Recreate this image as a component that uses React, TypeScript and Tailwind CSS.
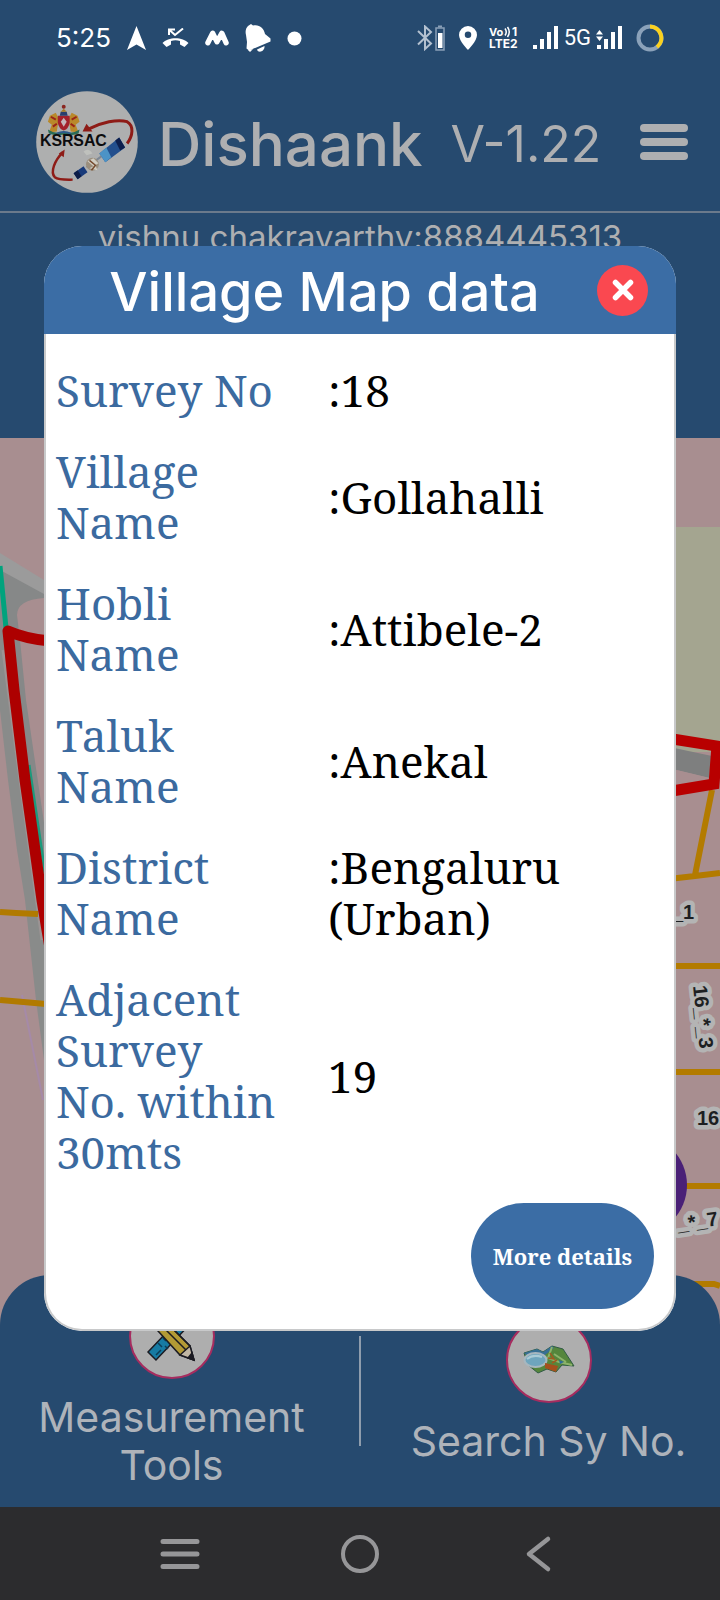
const rows = [
    { label: "Survey No", value: ":18" },
    { label: "Village Name", value: ":Gollahalli" },
    { label: "Hobli Name", value: ":Attibele-2" },
    { label: "Taluk Name", value: ":Anekal" },
    { label: "District Name", value: ":Bengaluru (Urban)" },
    { label: "Adjacent Survey No. within 30mts", value: "19" },
];

const SignalBars = ({ data = false }: { data?: boolean }) => (
    <svg className="overflow-visible" width="25" height="24" viewBox="0 0 25 24" fill="#fff">
        <rect x="0" y="19" width="4" height="4" />
        <rect x="7" y="13" width="4" height="10" />
        <rect x="14" y="6" width="4" height="17" />
        <rect x="21" y="0" width="4" height="23" />
        {data && <path d="M-1 8.500L2.500 4L6 8.500ZM-1 10.500L2.500 15L6 10.500Z" />}
    </svg>
);

const StatusBar = () => {
    return (
        <div className="flex h-19 items-center justify-between pl-14 pr-14 text-white">
            <div className="flex items-center gap-4">
                <span className="font-[Inter,sans-serif] text-[26px] leading-8">5:25</span>
                <svg width="19" height="24" viewBox="0 0 19 24" fill="#fff">
                    <path d="M9.500 0L19 24L9.500 18.500L0 24Z" />
                </svg>
                <svg width="27" height="20" viewBox="0 0 27 20" fill="none" stroke="#fff">
                    <path d="M7 7V1.500H13M7.500 2L13 7L21 0.500" strokeWidth="2" />
                    <path d="M0.500 15C6 8.500 21 8.500 26.500 15L22.500 19L18 16.500V13C15 12 12 12 9 13V16.500L4.500 19Z" fill="#fff" stroke="none" />
                </svg>
                <svg width="24" height="16" viewBox="0 0 25 16" fill="none" stroke="#fff" strokeWidth="5.500" strokeLinecap="round" strokeLinejoin="round">
                    <path d="M3 13L8 3L12.500 12L17.500 3L22 13" />
                </svg>
                <svg width="26" height="28" viewBox="0 0 26 28" fill="#fff">
                    <path d="M3 2L6 0L8 1.500C14 0 19 4 20 10L25.500 14.500V17.500L4 26.500L1.500 24.500L2 18L1 11C0 7 1 4 3 2Z" />
                    <path d="M12 25.500L19.500 22C20 28 13 29.500 12 25.500ZM3 26L5 28L8 25Z" />
                </svg>
                <svg width="15" height="15" viewBox="0 0 15 15">
                    <circle cx="7.500" cy="7.500" r="7" fill="#fff" />
                </svg>
            </div>
            <div className="flex items-center gap-3.5">
                <svg width="28" height="26" viewBox="0 0 28 26" fill="none">
                    <path d="M1 6L14 18.500L8 24V1.500L14 7L1 19.500" stroke="#b4c1d0" strokeWidth="2" />
                    <rect x="19" y="3" width="8" height="22" stroke="#8aa0b8" strokeWidth="1.500" />
                    <path d="M21 1.500H25" stroke="#8aa0b8" strokeWidth="2" />
                    <rect x="21" y="8" width="4.500" height="15" fill="#fff" />
                </svg>
                <div className="flex items-center gap-3">
                    <svg width="18" height="24" viewBox="0 0 18 24">
                        <path d="M9 0A9 9 0 0 0 0 9C0 15 9 24 9 24S18 15 18 9A9 9 0 0 0 9 0ZM9 5.500A3.200 3.200 0 1 1 9 12A3.200 3.200 0 0 1 9 5.500Z" fill="#fff" fillRule="evenodd" />
                    </svg>
                    <svg className="overflow-visible" width="30" height="30" viewBox="0 -3 30 30" fill="#fff" fontFamily="Inter, sans-serif" fontWeight="700">
                        <text x="0" y="10" fontSize="11">Vo</text>
                        <path d="M16 2.500Q18.500 6 16 9.500M18.500 1Q22 6 18.500 11" fill="none" stroke="#fff" strokeWidth="1.500" />
                        <text x="23" y="10" fontSize="12">1</text>
                        <text x="0" y="22" fontSize="12">LTE2</text>
                    </svg>
                </div>
                <div className="flex items-center gap-1.5">
                    <SignalBars />
                    <span className="font-[Roboto,sans-serif] text-[22px] leading-6">5G</span>
                    <SignalBars data />
                </div>
                <svg width="28" height="28" viewBox="0 0 28 28" fill="none" strokeWidth="4">
                    <circle cx="14" cy="14" r="11.500" stroke="#8ba2ba" />
                    <path d="M14 2.500A11.500 11.500 0 0 1 21 23" stroke="#fad11e" />
                </svg>
            </div>
        </div>
    );
};

const Logo = () => (
    <svg className="size-[102px] shrink-0" viewBox="6 9 103 103">
        <circle cx="57.500" cy="60.500" r="51.300" fill="#aeafaf" />
        <g>
            <path d="M20 34L26 31L29 37L27 50L19 51L22 43L18 40Z" fill="#b9892a" />
            <path d="M48 34L42 31L39 37L41 50L49 51L46 43L50 40Z" fill="#b9892a" />
            <path d="M21 35L26 38M47 35L42 38M23 45L27 42M45 45L41 42" stroke="#9a2318" strokeWidth="2" />
            <path d="M28 34H40V41Q39 47 34 49Q29 47 28 41Z" fill="#a3212c" />
            <path d="M34 36L37 40L34 45L31 40Z" fill="#c5b6bb" />
            <path d="M30 34H38L37 30H31Z" fill="#2a3f6e" />
            <path d="M31 30L34 27L37 30Z" fill="#a77b22" />
            <circle cx="34" cy="25" r="2" fill="#8a2620" />
            <path d="M18 48Q25 53 34 50Q43 53 50 48L49 52Q42 55 34 53Q26 55 19 52Z" fill="#2a6b55" />
            <path d="M27 52Q34 49 41 52" fill="none" stroke="#2d5a8c" strokeWidth="2" />
        </g>
        <path d="M98 62C104 54 105 44 98 40C88 37 72 41 60 47" fill="none" stroke="#8e1c17" strokeWidth="3" />
        <path d="M53 50L57 42L63 50Z" fill="#8e1c17" />
        <path d="M33 71C25 79 20 91 25 96C29 99 36 98.500 43 98.500" fill="none" stroke="#8e1c17" strokeWidth="2.500" />
        <path d="M29 72L35 68L34 76Z" fill="#8e1c17" />
        <text x="10" y="65" fontSize="16" fontWeight="700" fontFamily="Liberation Sans, Arial, sans-serif" fill="#0c0c0e">KSRSAC</text>
        <path d="M70 72L90 56L96 66L76 81Z" fill="#234f8d" />
        <path d="M70 72L77 66L82 76L76 81Z" fill="#4c93c6" />
        <path d="M86 59L90 56L96 66L91 69Z" fill="#0d1f4d" />
        <path d="M44 92L54 85L58 91L48 98Z" fill="#183a7a" />
        <path d="M44 92L48 89L52 95L48 98Z" fill="#0d1d47" />
        <path d="M57 86L72 75" stroke="#7c8794" strokeWidth="2" />
        <circle cx="63" cy="83" r="6.500" fill="#9a8e7d" />
        <path d="M58 80L64 77L69 82L64 85ZM60 87L66 84L68 89" fill="#d1cdc2" />
        <path d="M60 79L66 84L62 89" fill="none" stroke="#74492d" strokeWidth="1.500" />
        <path d="M54 70Q59 66 63 72L57 74Z" fill="#bfc1bd" />
    </svg>
);

const Header = () => {
    return (
        <header className="h-[438px] bg-[#264a6f] font-[Inter,sans-serif] text-[#aeafb1]">
            <StatusBar />
            <div className="flex h-[137px] items-center border-b-2 border-[#6b7a8c] pb-1 pl-9 pr-8">
                <Logo />
                <h1 className="ml-5 pt-1 text-[60px] font-medium leading-16">Dishaank</h1>
                <span className="ml-7 pt-1 text-[50px] leading-14">V-1.22</span>
                <button type="button" aria-label="Menu" className="ml-auto flex w-12 flex-col gap-[6px]">
                    <span className="h-2 w-full rounded-full bg-[#aeafb1]" />
                    <span className="h-2 w-full rounded-full bg-[#aeafb1]" />
                    <span className="h-2 w-full rounded-full bg-[#aeafb1]" />
                </button>
            </div>
            <p className="text-center text-[33px] leading-12">vishnu chakravarthy:8884445313</p>
        </header>
    );
};

const MapCanvas = () => (
    <svg className="absolute inset-0 size-full" viewBox="0 438 720 1070" preserveAspectRatio="xMidYMin slice">
        <rect y="438" width="720" height="1070" fill="#a88e90" />
        {/* roads on the left */}
        <path d="M0 568L44 588V598Q17 600 17 615L20 640L26 700L48 850V885L12 700L0 640Z" fill="#868888" />
        <path d="M0 553L44 580V594L0 570Z" fill="#9b9b9b" />
        <path d="M0 640H5L20 780L44 940V1060L36 1000L25 900L17 850L8 780L0 710Z" fill="#898b8a" />
        <path d="M3 650L20 780L42 940" fill="none" stroke="#9c9494" strokeWidth="3" />
        <path d="M0 566L6 628" stroke="#00a37d" strokeWidth="5" />
        <path d="M29 765L46 880" stroke="#1c9a7c" strokeWidth="3" />
        <path d="M22 995Q29 1030 43 1100" fill="none" stroke="#a58aa8" strokeWidth="2" />
        <path d="M0 912L16 913L38 914M0 1000L12 1001L46 1004" fill="none" stroke="#b17a00" strokeWidth="6" />
        <path d="M50 641Q26 639 8 631L14 690L25 780L35 850L42 900L52 960" fill="none" stroke="#ad0000" strokeWidth="11" strokeLinejoin="round" />
        {/* plots on the right */}
        <rect x="660" y="527" width="60" height="225" fill="#a4a590" />
        <path d="M660 745L712 756L709 778L660 766Z" fill="#7e7f7f" />
        <path d="M660 766L710 778V790L660 795Z" fill="#a88e90" />
        <path d="M712 790L695 875M660 880L695 876L720 873M660 966H720M660 1072H720M660 1186H720M660 1284H714L720 1286" fill="none" stroke="#b37b00" strokeWidth="6" />
        <path d="M660 737L717 746L714 784L660 793" fill="none" stroke="#b80000" strokeWidth="11" />
        <circle cx="636" cy="1185" r="51" fill="#4a2077" />
        <g fontFamily="Liberation Sans, Arial, sans-serif" fontWeight="700" fontSize="20" fill="#1d1f22" stroke="#b4b4b4" strokeWidth="9" strokeLinejoin="round" paintOrder="stroke">
            <text x="672" y="919">_1</text>
            <text transform="translate(693 986) rotate(84)">16_*_3</text>
            <text x="697" y="1125">16</text>
            <text transform="translate(678 1231) rotate(-8)">_*_7</text>
        </g>
    </svg>
);

const PencilRuler = () => (
    <svg width="52" height="52" viewBox="0 0 52 52" stroke="#1b1b22" strokeWidth="1.500">
        <path d="M2 42L38 4L46 12L10 50Z" fill="#177ba3" />
        <path d="M12 33L16 37M17 28L20 31M22 23L26 27M10 45L15 40M19 36L22 39" stroke="#0c3d57" />
        <path d="M2 10L10 2L44 36L48 50L34 45Z" fill="#b39a35" />
        <path d="M6 6L40 40M10 2L44 36" fill="none" />
        <path d="M34 45L44 36L48 50Z" fill="#c1b7a5" />
        <path d="M42 48L46 43L48 50Z" fill="#1b1b22" />
    </svg>
);

const MapSearch = () => (
    <svg width="52" height="30" viewBox="0 0 52 30">
        <path d="M1 8L14 4L20 7L29 1L40 4L51 21L39 20L33 27L24 24L15 28L5 20Z" fill="#55863c" stroke="#315c45" />
        <path d="M1 8L14 4L20 7L29 1L31 3L22 10L8 14Z" fill="#376f94" />
        <path d="M29 2L25 13L36 17L49 20M31 9L43 17" fill="none" stroke="#8cb36a" strokeWidth="2" />
        <ellipse cx="12.500" cy="15" rx="11" ry="7" fill="#6ea5bd" stroke="#a7b7bf" strokeWidth="2" />
        <path d="M4 14Q10 9 19 12" fill="none" stroke="#aacbd6" strokeWidth="2" />
        <path d="M22 18L35 21L33 27L22 23Z" fill="#a4501d" />
        <path d="M25 13L31 14L27 8M29 18L34 15" fill="none" stroke="#a05a20" strokeWidth="1.500" />
        <path d="M36 15L41 17L37 19Z" fill="#2e6c9a" />
    </svg>
);

const Footer = () => {
    return (
        <footer className="relative flex h-[232px] items-center rounded-t-[50px] bg-[#264a6f] font-[Inter,sans-serif] text-[41px] leading-12 text-[#aeb3ba]">
            <a href="#measurement" className="flex flex-1 flex-col items-center gap-3.5 text-center">
                <span className="flex size-[86px] items-center justify-center rounded-full border-2 border-[#a62c5f] bg-[#aeaeae]">
                    <PencilRuler />
                </span>
                <span>Measurement<br />Tools</span>
            </a>
            <div className="mx-4 h-[110px] w-0.5 bg-[#8f9dad]" />
            <a href="#search" className="flex flex-1 flex-col items-center gap-3.5 whitespace-nowrap text-center">
                <span className="flex size-[86px] items-center justify-center rounded-full border-2 border-[#a62c5f] bg-[#aeaeae]">
                    <MapSearch />
                </span>
                <span>Search Sy No.</span>
            </a>
        </footer>
    );
};

const NavBar = () => {
    return (
        <nav className="flex h-[93px] items-center justify-center gap-35 bg-[#2c2c2e]">
            <button type="button" aria-label="Recent apps">
                <svg width="40" height="40" viewBox="0 0 40 40" stroke="#969698" strokeWidth="5" strokeLinecap="round">
                    <path d="M3 7.500H37M3 20H37M3 32.500H37" />
                </svg>
            </button>
            <button type="button" aria-label="Home">
                <svg width="40" height="40" viewBox="0 0 40 40" fill="none" stroke="#969698" strokeWidth="4">
                    <circle cx="20" cy="20" r="17" />
                </svg>
            </button>
            <button type="button" aria-label="Back">
                <svg width="40" height="40" viewBox="0 0 40 40" fill="none" stroke="#969698" strokeWidth="4.500" strokeLinecap="round" strokeLinejoin="round">
                    <path d="M28 5L9 20L28 35" />
                </svg>
            </button>
        </nav>
    );
};

const VillageDialog = () => {
    return (
        <div className="absolute inset-x-0 top-[246px] px-11">
            <section role="dialog" aria-labelledby="dialog-title" className="overflow-hidden rounded-[38px] bg-white">
                <div className="flex h-[88px] items-center bg-[#3b6da5] pl-2 pr-7">
                    <h2 id="dialog-title" className="flex-1 pt-1 text-center font-[Inter,sans-serif] text-[54px] font-medium leading-16 text-white">
                        Village Map data
                    </h2>
                    <button type="button" aria-label="Close" className="flex size-[51px] items-center justify-center rounded-full bg-[#fa4850]">
                        <svg width="22" height="22" viewBox="0 0 22 22" stroke="#fff" strokeWidth="5.500" strokeLinecap="round">
                            <path d="M3.500 3.500L18.500 18.500M18.500 3.500L3.500 18.500" />
                        </svg>
                    </button>
                </div>
                <div className="rounded-b-[38px] border-2 border-t-0 border-[#c8c9ca] pb-5 pt-4 font-['Noto_Serif','DejaVu_Serif',serif]">
                    <table className="w-full table-fixed text-left text-[44px] leading-[51px]">
                        <tbody>
                            {rows.map((row) => (
                                <tr key={row.label}>
                                    <th scope="row" className="w-[43%] py-[15px] pl-[10px] pr-10 font-normal text-[#3b6a9f]">{row.label}</th>
                                    <td className="py-[15px] pl-3 pr-4 text-black">{row.value}</td>
                                </tr>
                            ))}
                        </tbody>
                    </table>
                    <div className="mt-[10px] flex justify-end pr-5">
                        <button type="button" className="h-[106px] rounded-full bg-[#3b6da5] px-[22px] text-[22px] font-bold text-white">
                            More details
                        </button>
                    </div>
                </div>
            </section>
        </div>
    );
};

const App = () => {
    return (
        <div className="relative flex min-h-screen flex-col overflow-hidden">
            <Header />
            <main className="relative flex flex-1 flex-col justify-end">
                <MapCanvas />
                <Footer />
            </main>
            <NavBar />
            <VillageDialog />
        </div>
    );
};

export default App;
